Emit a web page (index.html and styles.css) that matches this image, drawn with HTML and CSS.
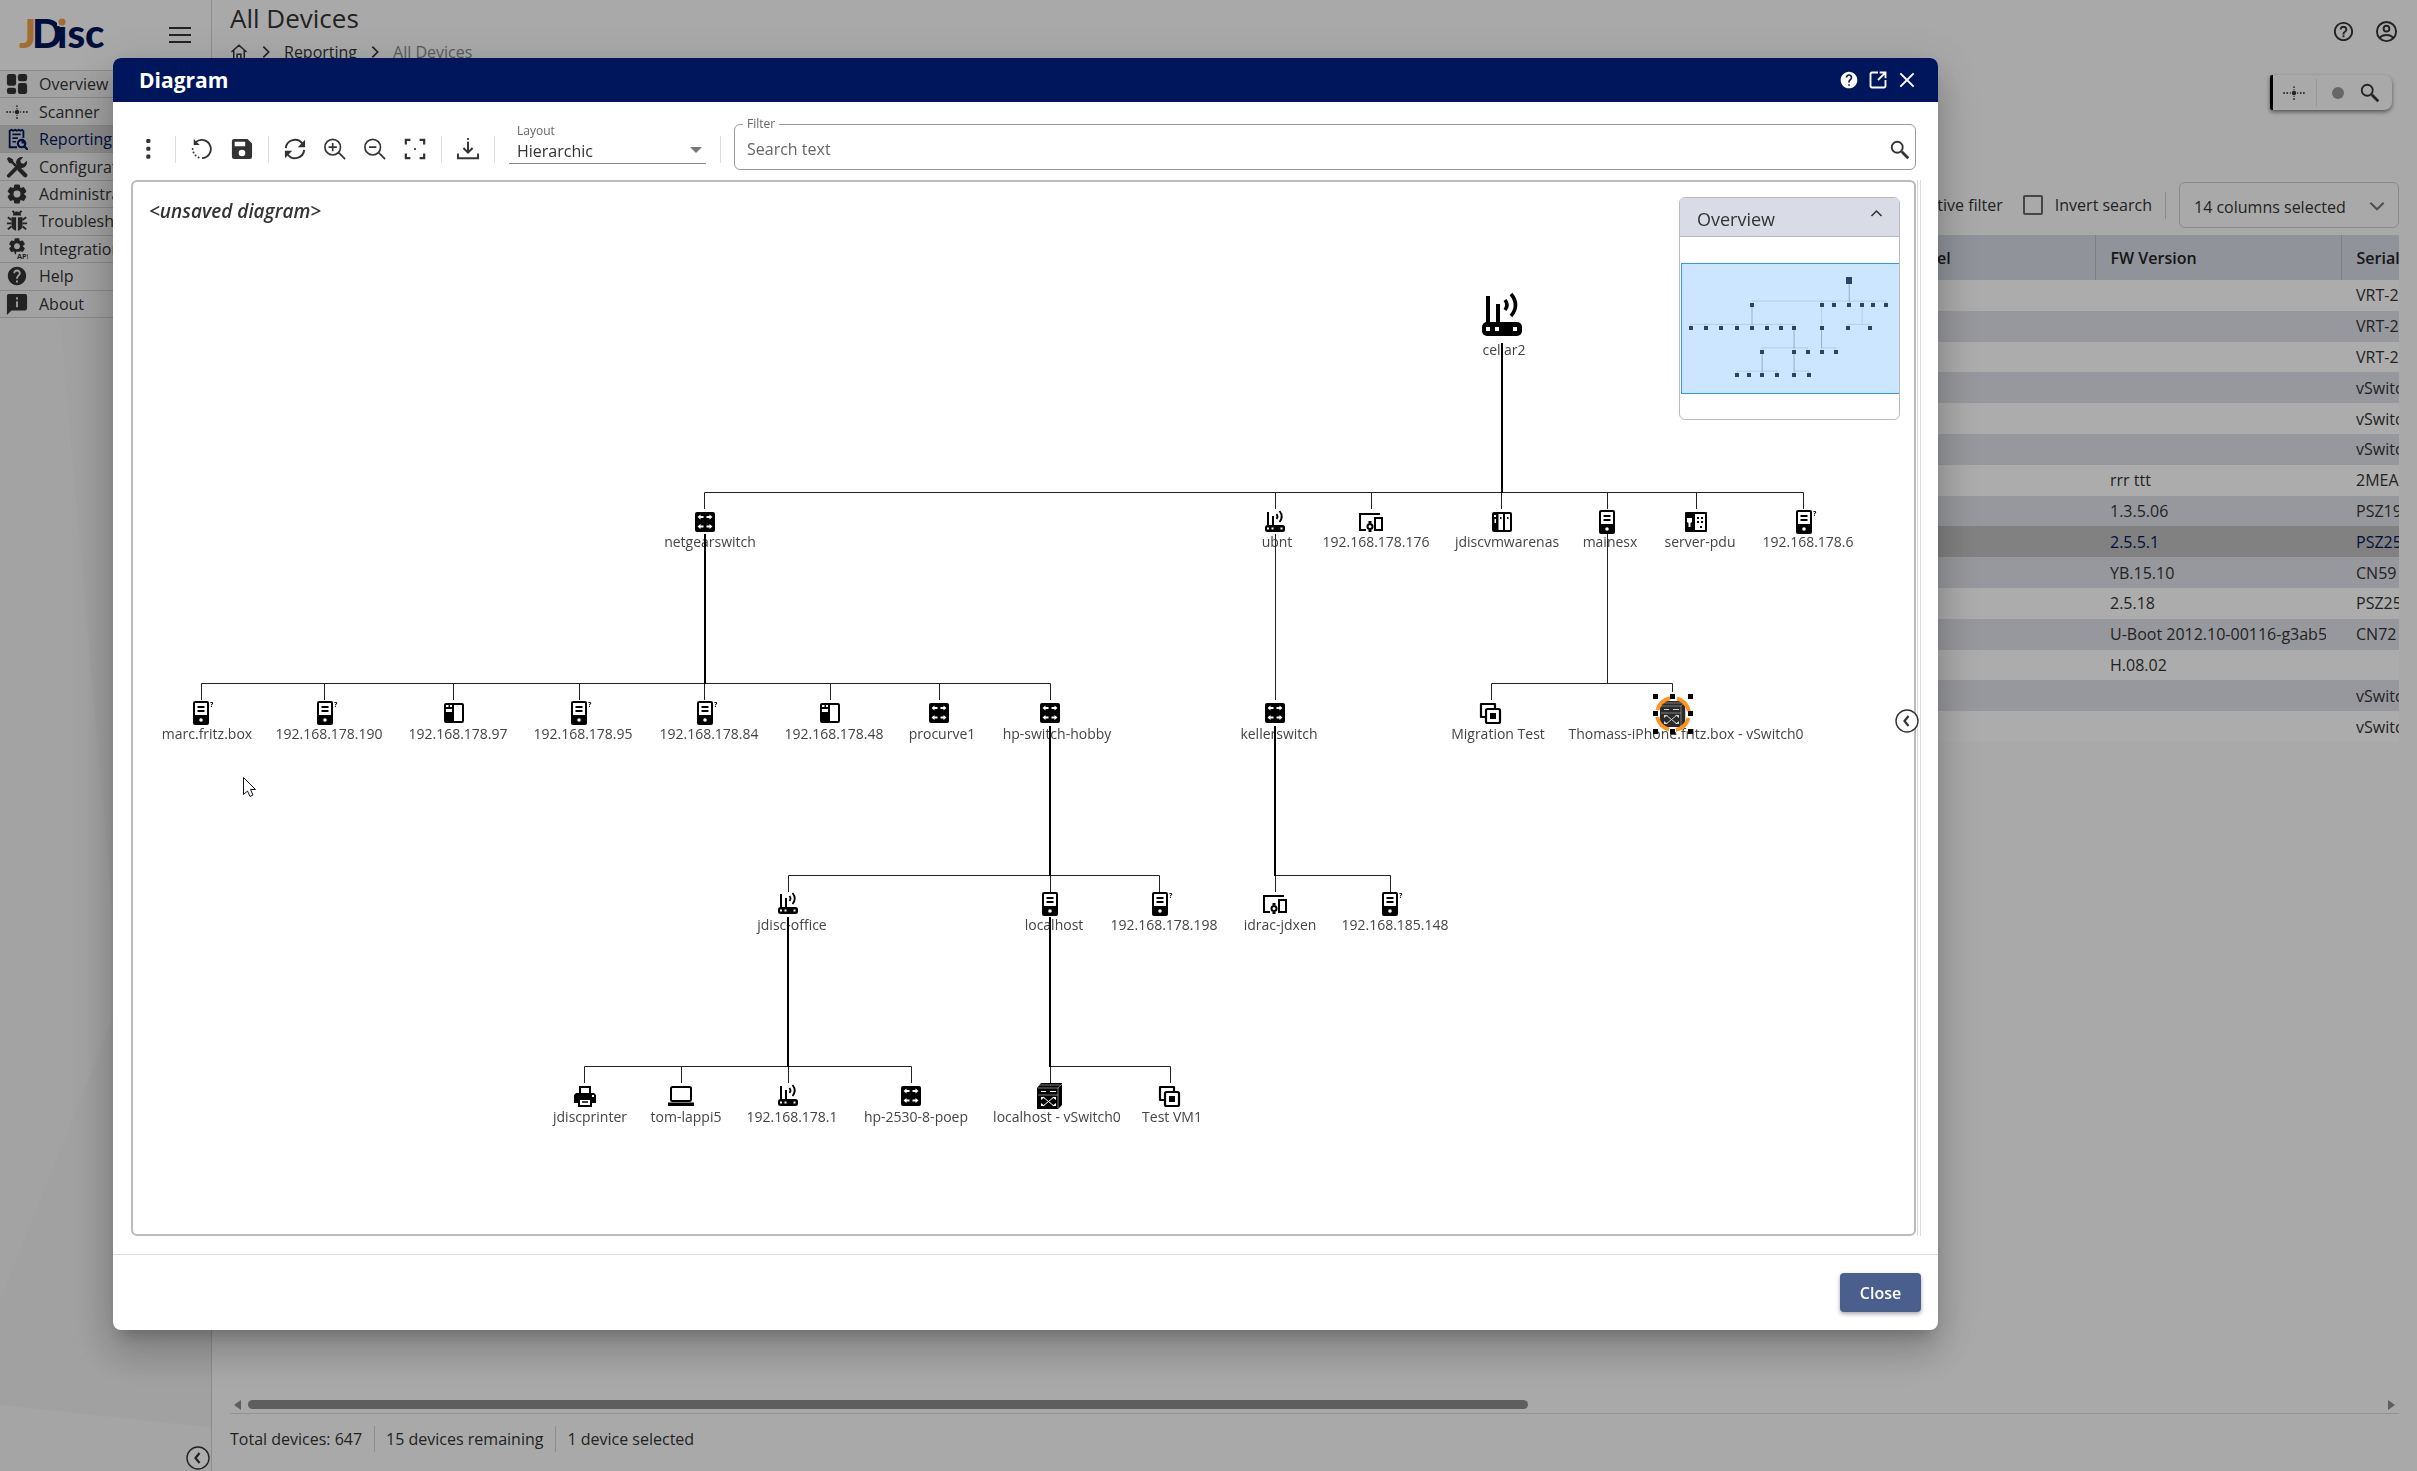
FILE: index.html
```
<!DOCTYPE html>
<html lang="en">
<head>
    <meta charset="UTF-8">
    <meta name="viewport" content="width=device-width, initial-scale=1.0">
    <title>All Devices - Diagram</title>
    <link rel="stylesheet" href="styles.css">
</head>
<body>
    <!-- Icon sprite -->
    <svg class="sprite" aria-hidden="true">
        <symbol id="i-dashboard" viewBox="0 0 24 24">
            <rect x="1" y="1" width="10" height="13" rx="2.5"/><rect x="13" y="1" width="10" height="8" rx="2.5"/>
            <rect x="1" y="16" width="10" height="7" rx="2.5"/><rect x="13" y="11" width="10" height="12" rx="2.5"/>
        </symbol>
        <symbol id="i-scanner" viewBox="0 0 24 24">
            <circle cx="12" cy="12" r="2.4"/>
            <circle cx="1.2" cy="12" r="1"/><circle cx="4.6" cy="12" r="1"/><circle cx="8" cy="12" r=".8"/>
            <circle cx="16" cy="12" r=".8"/><circle cx="19.4" cy="12" r="1"/><circle cx="22.8" cy="12" r="1"/>
            <circle cx="12" cy="5.5" r="1"/><circle cx="12" cy="8.4" r=".7"/><circle cx="12" cy="15.6" r=".7"/><circle cx="12" cy="18.5" r="1"/>
        </symbol>
        <symbol id="i-report" viewBox="0 0 24 24">
            <path d="M19 11V3.5L17.5 2 16 3l-2-1-2 1-2-1-2 1-2-1-2 1v18h8" fill="none" stroke="currentColor" stroke-width="2"/>
            <path d="M7 7h9M7 11h6M7 15h4" stroke="currentColor" stroke-width="1.8"/>
            <circle cx="17" cy="17" r="4" fill="none" stroke="currentColor" stroke-width="2.4"/>
            <path d="M17 17v-4a4 4 0 0 1 4 4z"/><path d="M20 20l4 4" stroke="currentColor" stroke-width="2.4"/>
        </symbol>
        <symbol id="i-tools" viewBox="0 0 24 24">
            <path d="M3 21.5L14.5 10" stroke="currentColor" stroke-width="4" stroke-linecap="round"/>
            <path d="M22.6 5.2l-3.3 3.2-3-.7-.7-3L18.8 1.4a6 6 0 1 0 3.8 3.8z"/>
            <path d="M1 3l2-2 4.5 2.5.5 2.5 4 4-2 2-4-4-2.5-.5z"/>
            <path d="M15 15l6 6" stroke="currentColor" stroke-width="4.6" stroke-linecap="round"/>
        </symbol>
        <symbol id="i-gear" viewBox="0 0 24 24">
            <path stroke="currentColor" stroke-width="1.6" d="M19.14 12.94c.04-.3.06-.61.06-.94 0-.32-.02-.64-.07-.94l2.03-1.58c.18-.14.23-.41.12-.61l-1.92-3.32c-.12-.22-.37-.29-.59-.22l-2.39.96c-.5-.38-1.03-.7-1.62-.94l-.36-2.54c-.04-.24-.24-.41-.48-.41h-3.84c-.24 0-.43.17-.47.41l-.36 2.54c-.59.24-1.13.57-1.62.94l-2.39-.96c-.22-.08-.47 0-.59.22L2.74 8.87c-.12.21-.08.47.12.61l2.03 1.58c-.05.3-.09.63-.09.94s.02.64.07.94l-2.03 1.58c-.18.14-.23.41-.12.61l1.92 3.32c.12.22.37.29.59.22l2.39-.96c.5.38 1.03.7 1.62.94l.36 2.54c.05.24.24.41.48.41h3.84c.24 0 .44-.17.47-.41l.36-2.54c.59-.24 1.13-.56 1.62-.94l2.39.96c.22.08.47 0 .59-.22l1.92-3.32c.12-.22.07-.47-.12-.61l-2.01-1.58zM12 16.6c-2.54 0-4.6-2.06-4.6-4.6s2.06-4.6 4.6-4.6 4.6 2.06 4.6 4.6-2.06 4.6-4.6 4.6z"/>
        </symbol>
        <symbol id="i-bug" viewBox="0 0 24 24">
            <path d="M7.5 6a4.5 4.5 0 0 1 9 0z"/>
            <path d="M6 8h5v14.5A6 6 0 0 1 6 17zM13 8h5v9a6 6 0 0 1-5 5.5z"/>
            <path d="M9 3L7 1M15 3l2-2M6 11L2 8M6 14.5H1M6 18l-4 3M18 11l4-3M18 14.5h5M18 18l4 3" stroke="currentColor" stroke-width="2" fill="none"/>
        </symbol>
        <symbol id="i-help" viewBox="0 0 24 24">
            <path d="M12 2C6.48 2 2 6.48 2 12s4.48 10 10 10 10-4.48 10-10S17.52 2 12 2zm1 17h-2v-2h2v2zm2.07-7.75l-.9.92C13.45 12.9 13 13.5 13 15h-2v-.5c0-1.1.45-2.1 1.17-2.83l1.24-1.26c.37-.36.59-.86.59-1.41 0-1.1-.9-2-2-2s-2 .9-2 2H8c0-2.21 1.79-4 4-4s4 1.79 4 4c0 .88-.36 1.68-.93 2.25z"/>
        </symbol>
        <symbol id="i-help-outline" viewBox="0 0 24 24">
            <path d="M11 18h2v-2h-2v2zm1-16C6.48 2 2 6.48 2 12s4.48 10 10 10 10-4.48 10-10S17.52 2 12 2zm0 18c-4.41 0-8-3.59-8-8s3.59-8 8-8 8 3.59 8 8-3.59 8-8 8zm0-14c-2.21 0-4 1.79-4 4h2c0-1.1.9-2 2-2s2 .9 2 2c0 2-3 1.75-3 5h2c0-2.25 3-2.5 3-5 0-2.21-1.79-4-4-4z"/>
        </symbol>
        <symbol id="i-about" viewBox="0 0 24 24">
            <path fill-rule="evenodd" d="M3 1h18a2 2 0 0 1 2 2v14a2 2 0 0 1-2 2H6l-5 5V3a2 2 0 0 1 2-2zm8 3.5V7h2V4.5zM11 9v6.5h2V9z"/>
        </symbol>
        <symbol id="i-account" viewBox="0 0 24 24">
            <circle cx="12" cy="12" r="10" fill="none" stroke="currentColor" stroke-width="2"/>
            <circle cx="12" cy="9" r="3" fill="none" stroke="currentColor" stroke-width="2"/>
            <path d="M5 19c2-4.5 12-4.5 14 0" fill="none" stroke="currentColor" stroke-width="2"/>
        </symbol>
        <symbol id="i-search" viewBox="0 0 24 24">
            <circle cx="9" cy="9" r="6" fill="none" stroke="currentColor" stroke-width="2"/>
            <path d="M14 14l7 7" stroke="currentColor" stroke-width="3"/>
        </symbol>
        <symbol id="i-home" viewBox="0 0 24 24">
            <path d="M2 12L12 3l10 9M5 10v12h4.5v-7h5v7H19V10" fill="none" stroke="currentColor" stroke-width="2"/>
        </symbol>
        <symbol id="i-chevron" viewBox="0 0 24 24"><path d="M8 4l8 8-8 8" fill="none" stroke="currentColor" stroke-width="2.5"/></symbol>
        <symbol id="i-collapse" viewBox="0 0 24 24">
            <circle cx="12" cy="12" r="11" fill="#fff" stroke="currentColor" stroke-width="1.4"/>
            <path d="M13.5 7l-4 5 4 5" fill="none" stroke="currentColor" stroke-width="2.2"/>
        </symbol>
        <symbol id="i-open" viewBox="0 0 24 24">
            <path d="M12 3H5a2 2 0 0 0-2 2v14a2 2 0 0 0 2 2h14a2 2 0 0 0 2-2v-7M14 3h7v7M20 4l-8 8" fill="none" stroke="currentColor" stroke-width="2.2"/>
        </symbol>
        <symbol id="i-x" viewBox="0 0 24 24"><path d="M4 4l16 16M20 4L4 20" stroke="currentColor" stroke-width="2.4"/></symbol>
        <symbol id="i-more" viewBox="0 0 24 24">
            <rect x="9" y="1" width="4.5" height="4.5" rx="1.5"/><rect x="9" y="9.5" width="4.5" height="4.5" rx="1.5"/><rect x="9" y="18" width="4.5" height="4.5" rx="1.5"/>
        </symbol>
        <symbol id="i-undo" viewBox="0 0 24 24">
            <path d="M5 4.5A10 10 0 1 1 12 22" fill="none" stroke="currentColor" stroke-width="2"/>
            <path d="M3 1v6.5h6.5z"/>
            <circle cx="1.8" cy="12" r="1"/><circle cx="2.8" cy="15.8" r="1.1"/><circle cx="5" cy="19" r="1.1"/><circle cx="8.3" cy="21.2" r="1.1"/>
        </symbol>
        <symbol id="i-save" viewBox="0 0 24 24">
            <path d="M18 1H3.5A2.5 2.5 0 0 0 1 3.5v17A2.5 2.5 0 0 0 3.5 23h17a2.5 2.5 0 0 0 2.5-2.5V6l-5-5zm-6 19a3.6 3.6 0 1 1 0-7.2 3.6 3.6 0 0 1 0 7.2zM15.5 9H4V4h11.5z"/>
        </symbol>
        <symbol id="i-refresh" viewBox="0 0 24 24">
            <path d="M2 11a10 10 0 0 1 18-5M22 13a10 10 0 0 1-18 5" fill="none" stroke="currentColor" stroke-width="2.2"/>
            <path d="M23 2v8h-8zM1 22v-8h8z"/>
        </symbol>
        <symbol id="i-zoom-in" viewBox="0 0 24 24">
            <path d="M18 10a8.5 8.5 0 1 1-17 0 8.5 8.5 0 0 1 17 0zM16 16l7 7M9.5 5.5v9M5 10h9" fill="none" stroke="currentColor" stroke-width="1.8"/>
        </symbol>
        <symbol id="i-zoom-out" viewBox="0 0 24 24">
            <path d="M18 10a8.5 8.5 0 1 1-17 0 8.5 8.5 0 0 1 17 0zM16 16l7 7M5.5 10h8" fill="none" stroke="currentColor" stroke-width="1.8"/>
        </symbol>
        <symbol id="i-fit" viewBox="0 0 24 24">
            <path d="M2 7V2h5M17 2h5v5M22 17v5h-5M7 22H2v-5" fill="none" stroke="currentColor" stroke-width="2.4"/><rect x="11" y="11" width="2" height="2"/>
        </symbol>
        <symbol id="i-download" viewBox="0 0 24 24">
            <path d="M12 4v12M7 11l5 5 5-5M1 17v5h22v-5" fill="none" stroke="currentColor" stroke-width="2.2"/><rect x="11" y="0" width="2" height="2"/>
        </symbol>

        <!-- Device icons, drawn around 0,0 -->
        <g id="d-switch">
            <rect x="-10" y="-10" width="20" height="20" rx="2"/>
            <path fill="#fff" d="M-7.500-5l3-2.500v1.500h3v2h-3v1.500zM7.500-5l-3-2.500v1.500h-3v2h3v1.500zM-7.500 4.500l3-2.500v1.500h3v2h-3v1.500zM7.500 4.500l-3-2.500v1.500h-3v2h3v1.500z"/>
        </g>
        <g id="d-server">
            <rect x="-8" y="-12" width="16" height="24" rx="2"/>
            <rect x="-6" y="-10" width="12" height="12" fill="#fff"/>
            <path d="M-3.500-6h7M-3.500-2h7" stroke="#000" stroke-width="1.8"/><circle cy="7" r="1.8" fill="#fff"/>
        </g>
        <g id="d-unknown"><use href="#d-server"/><text class="mark" x="9" y="-6">?</text></g>
        <g id="d-router">
            <rect x="-10" y="3" width="20" height="7" rx="2.5"/>
            <path d="M-7-10v14M-2-6v10" stroke="#000" stroke-width="2"/>
            <path d="M1.500-8q2 2.500 0 5M4.500-11q4.500 5.500 0 11" fill="none" stroke="#000" stroke-width="1.8"/>
            <path fill="#fff" d="M-8 5.500h2v2h-2zM-3.500 5.500h2v2h-2zM5.500 5.500h2v2h-2z"/>
        </g>
        <g id="d-devices">
            <path d="M9-8H-11V8h6" fill="none" stroke="#000" stroke-width="2"/>
            <rect x="4" y="-4" width="7" height="12" fill="none" stroke="#000" stroke-width="2"/>
            <circle cx="-1" cy="4.500" r="2.500" fill="none" stroke="#000" stroke-width="2"/><path d="M-2.500 8h3v2h-3zM-2.500-1h3v2h-3z"/>
        </g>
        <g id="d-nas">
            <rect x="-10" y="-10" width="20" height="20" rx="2"/>
            <path fill="#fff" d="M-3.500-8h4.500V8h-4.500zM3-8h5V8H3zM-7.500-3h1.500v4h-1.500zM-8-7h2v2h-2z"/><path d="M-2-5h1.500v2H-2zM5-5h1.500v2H5z"/>
        </g>
        <g id="d-pdu">
            <rect x="-11" y="-10" width="22" height="20" rx="1"/>
            <path fill="#fff" d="M-1-8h10V8H-1zM-9-4h5v4l-1.500 1v4h-2V1L-9 0z"/>
            <path d="M1-5h2v2H1zM5-5h2v2H5zM1-1h2v2H1zM5-1h2v2H5zM4 4h2v2H4z"/>
        </g>
        <g id="d-panel">
            <rect x="-10" y="-10" width="20" height="20" rx="2"/>
            <path fill="#fff" d="M0-8h8V8H0zM-8-4h6v3h-6zM-8-8h2.500v2h-2.500zM-4-8h2v2h-2z"/>
        </g>
        <g id="d-printer">
            <path fill-rule="evenodd" d="M-6-10H6v7h3l2 2v8H7v4H-7V7h-4v-8l2-2h3zM-4-8v5h8v-5zM-5 4v5H5V4zM7-1v2h2v-2z"/>
            <path d="M-3 6h6" stroke="#000" stroke-width="1.5"/>
        </g>
        <g id="d-laptop">
            <rect x="-10" y="-9" width="20" height="14" rx="1.5" fill="none" stroke="#000" stroke-width="2"/><rect x="-13" y="6.500" width="26" height="3.500"/>
        </g>
        <g id="d-vm">
            <path d="M-6 4h-4V-9H4v4" fill="none" stroke="#000" stroke-width="2.2" stroke-linejoin="round"/>
            <rect x="-5" y="-4" width="14" height="14" rx="1.5" fill="#fff" stroke="#000" stroke-width="2.2"/><rect x="-1" y="0" width="6" height="6"/>
        </g>
        <g id="d-vswitch">
            <path d="M-13-8l4-5h21v22l-4 4h-21z"/>
            <path d="M-12-8H8l4-4M8-8v20M-11-11H10M-12-1H8" fill="none" stroke="#fff" stroke-width=".5"/>
            <path d="M-9-4.500h5M0-4.500h6M-7 1L4 10M4 1L-7 10" stroke="#fff"/>
            <path fill="#fff" d="M-9 1h4l-4 3zM6 1v3L2 1zM-9 10V7l4 3zM6 10H2l4-3z"/>
        </g>
    </svg>

    <div class="app">
        <nav class="sidebar">
            <svg class="facets" preserveAspectRatio="none" viewBox="0 0 211 1471" aria-hidden="true">
                <polygon points="0,318 211,318 211,1428 0,1405" fill="#ededee"/>
                <polygon points="0,318 60,318 120,1000 0,1300" fill="#f1f1f2"/>
                <polygon points="0,1405 211,1428 211,1471 0,1471" fill="#f3f3f3"/>
            </svg>
            <div class="brand">
                <svg class="logo" viewBox="0 0 90 34" role="img" aria-label="JDisc">
                    <text x="14" y="30" class="logo-navy">D</text><text x="1" y="30" class="logo-orange">J</text>
                    <text x="39" y="30" class="logo-navy">isc</text>
                    <rect x="39" y="0" width="10" height="8" fill="#fafafa"/><circle cx="44" cy="4" r="3.5" fill="#f0a04b"/>
                </svg>
                <button class="burger" aria-label="Toggle menu"><span></span><span></span><span></span></button>
            </div>
            <ul class="menu">
                <li><a href="#"><svg><use href="#i-dashboard"/></svg>Overview</a></li>
                <li><a href="#"><svg><use href="#i-scanner"/></svg>Scanner</a></li>
                <li class="active"><a href="#"><svg><use href="#i-report"/></svg>Reporting</a></li>
                <li><a href="#"><svg><use href="#i-tools"/></svg>Configuration</a></li>
                <li><a href="#"><svg><use href="#i-gear"/></svg>Administration</a></li>
                <li><a href="#"><svg><use href="#i-bug"/></svg>Troubleshooting</a></li>
                <li><a href="#"><svg viewBox="0 0 24 24"><use href="#i-gear" x="2" y="-1" width="20" height="20"/><rect x="11" y="15" width="13" height="9" fill="#efefef"/><text x="12" y="23" class="api">API</text></svg>Integrations</a></li>
                <li><a href="#"><svg><use href="#i-help"/></svg>Help</a></li>
                <li><a href="#"><svg><use href="#i-about"/></svg>About</a></li>
            </ul>
            <button class="collapse-menu" aria-label="Collapse menu"><svg><use href="#i-collapse"/></svg></button>
        </nav>

        <main class="main">
            <header class="page-header">
                <div>
                    <h1>All Devices</h1>
                    <div class="breadcrumb">
                        <svg class="home"><use href="#i-home"/></svg>
                        <svg><use href="#i-chevron"/></svg>
                        <a href="#">Reporting</a>
                        <svg><use href="#i-chevron"/></svg>
                        <span>All Devices</span>
                    </div>
                </div>
                <div class="user-actions">
                    <button aria-label="Help"><svg><use href="#i-help-outline"/></svg></button>
                    <button aria-label="Account"><svg><use href="#i-account"/></svg></button>
                </div>
            </header>

            <div class="quick-bar">
                <div class="quick-card">
                    <button aria-label="Scan"><svg><use href="#i-scanner"/></svg></button>
                    <span class="sep"></span>
                    <span class="dot"></span>
                    <button aria-label="Search"><svg><use href="#i-search"/></svg></button>
                </div>
            </div>

            <div class="filter-row">
                <span>Active filter</span>
                <label class="check"><input type="checkbox"> Invert search</label>
                <span class="sep"></span>
                <div class="columns">
                    <select aria-label="Columns"><option>14 columns selected</option></select>
                    <svg><use href="#i-chevron"/></svg>
                </div>
            </div>

            <div class="table-wrap">
                <table>
                    <colgroup><col><col class="c-model"><col class="c-fw"><col class="c-serial"></colgroup>
                    <thead><tr><th></th><th>Model</th><th>FW Version</th><th>Serial Number</th></tr></thead>
                    <tbody>
                        <tr><td></td><td></td><td></td><td><div>VRT-2</div></td></tr>
                        <tr><td></td><td></td><td></td><td><div>VRT-2</div></td></tr>
                        <tr><td></td><td></td><td></td><td><div>VRT-2</div></td></tr>
                        <tr><td></td><td></td><td></td><td><div>vSwitch</div></td></tr>
                        <tr><td></td><td></td><td></td><td><div>vSwitch</div></td></tr>
                        <tr><td></td><td></td><td></td><td><div>vSwitch</div></td></tr>
                        <tr><td></td><td></td><td><div>rrr ttt</div></td><td><div>2MEA</div></td></tr>
                        <tr><td></td><td></td><td><div>1.3.5.06</div></td><td><div>PSZ19</div></td></tr>
                        <tr class="selected"><td></td><td></td><td><div>2.5.5.1</div></td><td><div>PSZ25</div></td></tr>
                        <tr><td></td><td></td><td><div>YB.15.10</div></td><td><div>CN59</div></td></tr>
                        <tr><td></td><td></td><td><div>2.5.18</div></td><td><div>PSZ25</div></td></tr>
                        <tr><td></td><td></td><td><div>U-Boot 2012.10-00116-g3ab5</div></td><td><div>CN72</div></td></tr>
                        <tr><td></td><td></td><td><div>H.08.02</div></td><td></td></tr>
                        <tr><td></td><td></td><td></td><td><div>vSwitch</div></td></tr>
                        <tr><td></td><td></td><td></td><td><div>vSwitch</div></td></tr>
                    </tbody>
                </table>
            </div>

            <div class="scrollbar">
                <span class="arrow left"></span>
                <div class="track"><div class="thumb"></div></div>
                <span class="arrow right"></span>
            </div>
            <footer class="status">
                <span>Total devices: 647</span>
                <span>15 devices remaining</span>
                <span>1 device selected</span>
            </footer>
        </main>
    </div>

    <div class="backdrop">
        <section class="dialog" role="dialog" aria-labelledby="dialog-title">
            <header class="dialog-header">
                <h2 id="dialog-title">Diagram</h2>
                <button aria-label="Help"><svg><use href="#i-help"/></svg></button>
                <button aria-label="Open in new window"><svg><use href="#i-open"/></svg></button>
                <button aria-label="Close dialog"><svg><use href="#i-x"/></svg></button>
            </header>

            <div class="toolbar">
                <button aria-label="More"><svg><use href="#i-more"/></svg></button>
                <span class="sep"></span>
                <button aria-label="Reset"><svg><use href="#i-undo"/></svg></button>
                <button aria-label="Save"><svg><use href="#i-save"/></svg></button>
                <span class="sep"></span>
                <button aria-label="Refresh"><svg><use href="#i-refresh"/></svg></button>
                <button aria-label="Zoom in"><svg><use href="#i-zoom-in"/></svg></button>
                <button aria-label="Zoom out"><svg><use href="#i-zoom-out"/></svg></button>
                <button aria-label="Fit content"><svg><use href="#i-fit"/></svg></button>
                <span class="sep"></span>
                <button aria-label="Export"><svg><use href="#i-download"/></svg></button>
                <span class="sep"></span>
                <div class="layout-field">
                    <label for="layout">Layout</label>
                    <select id="layout"><option>Hierarchic</option></select>
                </div>
                <span class="sep"></span>
                <div class="filter-field">
                    <label for="filter">Filter</label>
                    <input id="filter" type="text" placeholder="Search text">
                    <svg><use href="#i-search"/></svg>
                </div>
            </div>

            <div class="canvas-area">
                <div class="canvas">
                    <h3>&lt;unsaved diagram&gt;</h3>
                    <svg class="graph" width="1782" height="1052" viewBox="133 182 1782 1052">
                        <g class="labels">
                            <text x="1504" y="355">cellar2</text>
                            <text x="710" y="547">netgearswitch</text>
                            <text x="1277" y="547">ubnt</text>
                            <text x="1376" y="547">192.168.178.176</text>
                            <text x="1507" y="547">jdiscvmwarenas</text>
                            <text x="1610" y="547">mainesx</text>
                            <text x="1700" y="547">server-pdu</text>
                            <text x="1808" y="547">192.168.178.6</text>
                            <text x="207" y="739">marc.fritz.box</text>
                            <text x="329" y="739">192.168.178.190</text>
                            <text x="458" y="739">192.168.178.97</text>
                            <text x="583" y="739">192.168.178.95</text>
                            <text x="709" y="739">192.168.178.84</text>
                            <text x="834" y="739">192.168.178.48</text>
                            <text x="942" y="739">procurve1</text>
                            <text x="1057" y="739">hp-switch-hobby</text>
                            <text x="1279" y="739">kellerswitch</text>
                            <text x="1498" y="739">Migration Test</text>
                            <text x="1686" y="739">Thomass-iPhone.fritz.box - vSwitch0</text>
                            <text x="792" y="930">jdisc-office</text>
                            <text x="1054" y="930">localhost</text>
                            <text x="1164" y="930">192.168.178.198</text>
                            <text x="1280" y="930">idrac-jdxen</text>
                            <text x="1395" y="930">192.168.185.148</text>
                            <text x="590" y="1122">jdiscprinter</text>
                            <text x="686" y="1122">tom-lappi5</text>
                            <text x="792" y="1122">192.168.178.1</text>
                            <text x="916" y="1122">hp-2530-8-poep</text>
                            <text x="1057" y="1122">localhost - vSwitch0</text>
                            <text x="1172" y="1122">Test VM1</text>
                        </g>

                        <path id="edges-thin" class="edge" d="M704.500 509V492.500H1803.500V509M1275.500 509V492.500M1371.500 509V492.500M1501.500 509V492.500M1607.500 509V492.500M1696.500 509V492.500
                            M201.500 700V683.500H1050.500V700M324.500 700V683.500M453.500 700V683.500M579.500 700V683.500M704.500 700V683.500M830.500 700V683.500M939.500 700V683.500
                            M1275.500 534V700M1607.500 534V683.500M1491.500 700V683.500H1672.500V692
                            M788.500 892V875.500H1159.500V892M1050.500 892V875.500M1275.500 892V875.500H1390.500V892
                            M584.500 1083V1066.500H911.500V1083M681.500 1083V1066.500M788.500 1083V1066.500M1050.500 1083V1066.500H1170.500V1083"/>
                        <path id="edges-thick" class="edge thick" d="M1502 343V493M705 534V684M1050 726V876M1275 726V876M788 917V1067M1050 917V1067"/>

                        <g transform="translate(1502 316) scale(2)"><use href="#d-router"/></g>
                        <use href="#d-switch" x="705" y="522"/>
                        <use href="#d-router" x="1275" y="522"/>
                        <use href="#d-devices" x="1371" y="522"/>
                        <use href="#d-nas" x="1502" y="522"/>
                        <use href="#d-server" x="1607" y="522"/>
                        <use href="#d-pdu" x="1696" y="522"/>
                        <use href="#d-unknown" x="1804" y="522"/>

                        <use href="#d-unknown" x="201" y="713"/>
                        <use href="#d-unknown" x="325" y="713"/>
                        <use href="#d-panel" x="454" y="713"/>
                        <use href="#d-unknown" x="579" y="713"/>
                        <use href="#d-unknown" x="705" y="713"/>
                        <use href="#d-panel" x="830" y="713"/>
                        <use href="#d-switch" x="939" y="713"/>
                        <use href="#d-switch" x="1050" y="713"/>
                        <use href="#d-switch" x="1275" y="713"/>
                        <use href="#d-vm" x="1491" y="713"/>

                        <use href="#d-router" x="788" y="904"/>
                        <use href="#d-server" x="1050" y="904"/>
                        <use href="#d-unknown" x="1160" y="904"/>
                        <use href="#d-devices" x="1275" y="904"/>
                        <use href="#d-unknown" x="1390" y="904"/>

                        <use href="#d-printer" x="585" y="1096"/>
                        <use href="#d-laptop" x="681" y="1096"/>
                        <use href="#d-router" x="788" y="1096"/>
                        <use href="#d-switch" x="911" y="1096"/>
                        <use href="#d-vswitch" x="1050" y="1096"/>
                        <use href="#d-vm" x="1170" y="1096"/>

                        <!-- selected node -->
                        <g class="selection" transform="translate(1673 714)">
                            <use href="#d-vswitch"/>
                            <rect class="tint" x="-13" y="-13" width="26" height="26"/>
                            <circle r="16"/>
                            <path d="M-20-20h5v5h-5zM-3-20h5v5h-5zM15-20h5v5h-5zM-20-3h5v5h-5zM15-3h5v5h-5zM-20 15h5v5h-5zM-3 15h5v5h-5zM15 15h5v5h-5z"/>
                        </g>

                        <!-- mouse pointer -->
                        <path class="pointer" d="M243.500 777.500v17l4-3.500 2.500 5.500 3-1.500-2.500-5.500h5z"/>
                    </svg>

                    <aside class="overview">
                        <button class="overview-toggle">Overview<svg><use href="#i-chevron"/></svg></button>
                        <svg class="minimap" width="219" height="131" viewBox="1682 264 217 129">
                            <g transform="translate(1666 241) scale(0.122)"><use href="#edges-thin"/><use href="#edges-thick"/></g>
                            <g class="nodes">
                                <path d="M1846 277h6v7h-6z"/>
                                <path d="M1750 303h4v4h-4zM1820 303h4v4h-4zM1832 303h4v4h-4zM1847 303h4v4h-4zM1860 303h4v4h-4zM1871 303h4v4h-4zM1884 303h4v4h-4z"/>
                                <path d="M1689 326h4v4h-4zM1704 326h4v4h-4zM1719 326h4v4h-4zM1735 326h4v4h-4zM1750 326h4v4h-4zM1765 326h4v4h-4zM1779 326h4v4h-4zM1792 326h4v4h-4zM1820 326h4v4h-4zM1846 326h4v4h-4zM1868 326h4v4h-4z"/>
                                <path d="M1760 350h4v4h-4zM1792 350h4v4h-4zM1806 350h4v4h-4zM1820 350h4v4h-4zM1834 350h4v4h-4z"/>
                                <path d="M1735 373h4v4h-4zM1747 373h4v4h-4zM1760 373h4v4h-4zM1775 373h4v4h-4zM1792 373h4v4h-4zM1807 373h4v4h-4z"/>
                            </g>
                        </svg>
                    </aside>
                </div>
                <div class="splitter"></div>
                <button class="collapse-panel" aria-label="Show details"><svg><use href="#i-collapse"/></svg></button>
            </div>

            <footer class="dialog-footer">
                <button class="btn-primary">Close</button>
            </footer>
        </section>
    </div>
</body>
</html>
```
FILE: styles.css
```
:root {
    --navy: #00165c;
    --primary: #4a5f8e;
    --text: #333;
    --line: #dcdcdc;
    --page: #fafafa;
}
* {
    box-sizing: border-box;
}
body {
    margin: 0;
    font-family: "Open Sans", "Noto Sans", sans-serif;
    font-size: 16px;
    color: var(--text);
    background-color: var(--page);
    overflow: hidden;
}
h1, h2, h3, ul {
    margin: 0;
    padding: 0;
}
button, input, select {
    font: inherit;
    color: inherit;
}
button {
    border: 0;
    padding: 0;
    background: none;
    cursor: pointer;
}
select {
    appearance: none;
    border: 0;
    background: none;
}
a {
    color: inherit;
    text-decoration: none;
}
svg {
    fill: currentColor;
    flex-shrink: 0;
}
.sprite {
    position: absolute;
    width: 0;
    height: 0;
}
.sep {
    flex-shrink: 0;
    width: 1px;
    height: 27px;
    background-color: var(--line);
}

/* Sidebar */
.app {
    display: flex;
    height: 100vh;
}
.sidebar {
    position: relative;
    flex: 0 0 212px;
    border-right: 1px solid #d0d0d0;
}
.facets {
    position: absolute;
    top: 0;
    left: 0;
    width: 100%;
    height: 100%;
    z-index: -1;
}
.brand {
    display: flex;
    justify-content: space-between;
    align-items: center;
    height: 70px;
    padding: 0 20px 0 18px;
}
.logo {
    width: 90px;
    height: 34px;
    overflow: visible;
}
.logo text {
    font-family: Lato, sans-serif;
    font-weight: 900;
    font-size: 40px;
}
.logo-navy {
    fill: var(--navy);
}
.logo-orange {
    fill: #f0a04b;
}
.burger {
    display: grid;
    gap: 5px;
    width: 22px;
}
.burger span {
    height: 2px;
    background-color: var(--text);
}
.menu {
    display: grid;
    grid-auto-rows: 1fr;
    height: 248px;
    list-style: none;
    border-top: 1px solid #d0d0d0;
    background-color: #efefef;
}
.menu li {
    border-bottom: 1px solid #cacaca;
    overflow: hidden;
}
.menu a {
    display: flex;
    align-items: center;
    gap: 11px;
    height: 100%;
    padding-left: 6px;
    white-space: nowrap;
}
.menu svg {
    width: 22px;
    height: 22px;
}
.menu .active {
    background-color: #cfcfcf;
    color: var(--navy);
}
.api {
    font-size: 8px;
    font-weight: 700;
}
.collapse-menu {
    position: absolute;
    right: 1px;
    bottom: 1px;
}
.collapse-menu svg, .collapse-panel svg {
    display: block;
    width: 24px;
    height: 24px;
}

/* Main page */
.main {
    flex: 1;
    min-width: 0;
    display: flex;
    flex-direction: column;
    padding: 0 18px;
}
.page-header {
    display: flex;
    justify-content: space-between;
    height: 62px;
}
h1 {
    font-size: 26px;
    font-weight: 400;
    line-height: 36px;
}
.breadcrumb {
    display: flex;
    align-items: center;
    gap: 10px;
    line-height: 32px;
}
.breadcrumb svg {
    width: 16px;
    height: 16px;
}
.breadcrumb .home {
    width: 18px;
    height: 18px;
}
.breadcrumb span {
    color: #888;
}
.user-actions {
    display: flex;
    align-items: center;
    gap: 20px;
    padding-right: 1px;
}
.user-actions svg {
    display: block;
    width: 23px;
    height: 23px;
}
.quick-bar {
    display: flex;
    justify-content: flex-end;
    height: 119px;
    padding: 13px 7px 0 0;
}
.quick-card {
    display: flex;
    align-items: center;
    gap: 11px;
    width: 122px;
    height: 35px;
    padding-left: 10px;
    border-left: 3px solid #000;
    border-radius: 2px 8px 8px 2px;
    box-shadow: 0 2px 4px rgba(0,0,0,0.5);
}
.quick-card svg {
    display: block;
    width: 22px;
    height: 22px;
}
.quick-card .dot {
    width: 12px;
    height: 12px;
    margin: 0 4px;
    border-radius: 50%;
    background-color: #999;
}
.filter-row {
    display: flex;
    justify-content: flex-end;
    align-items: center;
    gap: 13px;
    height: 54px;
    padding-bottom: 6px;
}
.filter-row .sep {
    background-color: #ccc;
}
.check {
    display: flex;
    align-items: center;
    gap: 12px;
    margin-left: 7px;
}
.check input {
    appearance: none;
    width: 20px;
    height: 20px;
    margin: 0;
    border: 2px solid #666;
    border-radius: 2px;
}
.columns {
    position: relative;
    width: 220px;
    height: 46px;
    border: 1px solid #ccc;
    border-radius: 6px;
}
.columns select {
    width: 100%;
    height: 100%;
    padding: 4px 14px 0;
}
.columns svg {
    position: absolute;
    top: 13px;
    right: 11px;
    width: 20px;
    height: 20px;
    color: #777;
    transform: rotate(90deg);
    pointer-events: none;
}
.table-wrap {
    flex: 1;
    overflow: hidden;
}
table {
    width: 100%;
    height: 507px;
    table-layout: fixed;
    border-collapse: collapse;
}
.c-model {
    width: 208px;
}
.c-fw {
    width: 246px;
}
.c-serial {
    width: 58px;
}
th {
    height: 45px;
    padding: 0 15px;
    text-align: left;
    font-weight: 600;
    white-space: nowrap;
    overflow: hidden;
    color: #222;
    background-color: #d5d9e4;
    border-right: 1px solid #bbb;
}
td {
    padding: 0 15px;
    background-color: #fefefe;
}
td div {
    overflow: hidden;
    white-space: nowrap;
}
th:last-child, td:last-child {
    padding-right: 0;
    border-right: 0;
}
tbody tr:nth-child(even) td {
    background-color: #dfe0e7;
}
tbody tr.selected td {
    background-color: #bfbfbf;
    color: var(--navy);
}
.scrollbar {
    display: flex;
    align-items: center;
    gap: 7px;
    height: 17px;
    padding: 0 4px;
}
.track {
    flex: 1;
}
.thumb {
    width: 60%;
    height: 9px;
    border-radius: 5px;
    background-color: #8b8b8b;
}
.arrow {
    border: 5px solid transparent;
}
.arrow.left {
    border-left: 0;
    border-right: 7px solid #8b8b8b;
}
.arrow.right {
    border-right: 0;
    border-left: 7px solid #8b8b8b;
}
.status {
    display: flex;
    height: 58px;
    padding-top: 12px;
    border-top: 1px solid #d8d8d8;
}
.status span {
    height: 26px;
    line-height: 26px;
    padding-right: 12px;
    margin-right: 11px;
    border-right: 1px solid #d0d0d0;
}
.status span:last-child {
    border-right: 0;
}

/* Diagram dialog */
.backdrop {
    position: fixed;
    inset: 0;
    display: flex;
    padding: 58px 479px 141px 113px;
    background-color: rgba(0,0,0,0.32);
}
.dialog {
    flex: 1;
    min-width: 0;
    display: flex;
    flex-direction: column;
    border-radius: 8px;
    background-color: #fff;
    box-shadow: 0 11px 15px -7px rgba(0,0,0,0.2), 0 24px 38px 3px rgba(0,0,0,0.14), 0 9px 46px 8px rgba(0,0,0,0.12);
}
.dialog-header {
    display: flex;
    align-items: center;
    gap: 9px;
    height: 44px;
    padding: 0 21px 0 26px;
    border-radius: 8px 8px 0 0;
    color: #fff;
    background-color: var(--navy);
}
.dialog-header h2 {
    flex: 1;
    font-size: 21px;
    font-weight: 700;
}
.dialog-header svg {
    display: block;
    width: 20px;
    height: 20px;
}
.toolbar {
    display: flex;
    align-items: center;
    height: 78px;
    padding: 16px 22px 0 16px;
}
.toolbar button {
    display: grid;
    place-items: center;
    width: 40px;
    height: 40px;
}
.toolbar svg {
    width: 22px;
    height: 22px;
}
.toolbar .sep {
    margin: 0 6px;
}
.layout-field {
    position: relative;
    width: 197px;
    margin: 0 8px 12px;
    border-bottom: 1px solid #888;
}
.layout-field label {
    display: block;
    padding-left: 8px;
    font-size: 12px;
    line-height: 16px;
    color: #666;
}
.layout-field select {
    width: 100%;
    height: 24px;
    padding: 0 8px;
}
.layout-field::after {
    content: "";
    position: absolute;
    right: 4px;
    bottom: 10px;
    border: 6px solid transparent;
    border-top-color: #777;
    border-bottom: 0;
}
.filter-field {
    position: relative;
    flex: 1;
    display: flex;
    align-items: center;
    height: 46px;
    margin: 0 0 4px 7px;
    padding-right: 4px;
    border: 1px solid #999;
    border-radius: 6px;
}
.filter-field label {
    position: absolute;
    top: -9px;
    left: 8px;
    padding: 0 4px;
    font-size: 12px;
    line-height: 16px;
    color: #666;
    background-color: #fff;
}
.filter-field input {
    flex: 1;
    height: 40px;
    padding: 4px 12px 0;
    border: 0;
    outline: 0;
    background: none;
}
.filter-field input::placeholder {
    color: #666;
}
.filter-field svg {
    margin-top: 6px;
}
.canvas-area {
    position: relative;
    flex: 1;
    min-height: 0;
    display: flex;
    gap: 1px;
    padding: 0 17px 18px 18px;
}
.canvas {
    position: relative;
    flex: 1;
    min-width: 0;
    border: 2px solid #bbb;
    border-radius: 6px;
    overflow: hidden;
}
.canvas h3 {
    position: absolute;
    top: 16px;
    left: 16px;
    font-size: 19px;
    font-style: italic;
    font-weight: 600;
    line-height: 26px;
}
.graph {
    display: block;
    fill: #000;
}
.labels text {
    font-size: 14px;
    text-anchor: middle;
    fill: #444;
}
.mark {
    font-size: 7px;
    font-weight: 700;
}
.edge {
    fill: none;
    stroke: #222;
}
.edge.thick {
    stroke: #000;
    stroke-width: 2;
}
.selection circle {
    fill: none;
    stroke: #ff9320;
    stroke-width: 4;
    stroke-dasharray: 18 7;
    stroke-dashoffset: -4;
}
.selection .tint {
    fill: rgba(120,120,120,0.35);
}
.pointer {
    fill: #fff;
    stroke: #112;
}
.splitter {
    width: 4px;
    border: solid var(--line);
    border-width: 0 1px;
}
.collapse-panel {
    position: absolute;
    top: 529px;
    right: 19px;
}
.overview {
    position: absolute;
    top: 15px;
    right: 14px;
    width: 221px;
    height: 223px;
    border: 1px solid #bbb;
    border-radius: 6px;
    background-color: #fff;
    overflow: hidden;
}
.overview-toggle {
    display: flex;
    justify-content: space-between;
    align-items: center;
    width: 100%;
    height: 39px;
    padding: 4px 15px 0 17px;
    font-size: 18px;
    border-bottom: 1px solid #bbb;
    background-color: #d9dce6;
}
.overview-toggle svg {
    width: 15px;
    height: 15px;
    margin-bottom: 12px;
    transform: rotate(-90deg);
}
.minimap {
    display: block;
    margin: 26px 0 0 1px;
    border: 1px solid #2f96ff;
    background-color: #cce6ff;
}
.minimap .edge {
    stroke: #6d87a3;
    stroke-width: 6;
}
.nodes {
    fill: #2a4468;
}
.dialog-footer {
    display: flex;
    justify-content: flex-end;
    align-items: center;
    height: 76px;
    padding: 0 17px 0 0;
    border-top: 1px solid var(--line);
}
.btn-primary {
    width: 81px;
    height: 39px;
    border-radius: 4px;
    font-weight: 600;
    color: #fff;
    background-color: var(--primary);
    box-shadow: 0 2px 4px rgba(0,0,0,0.35);
}
```
